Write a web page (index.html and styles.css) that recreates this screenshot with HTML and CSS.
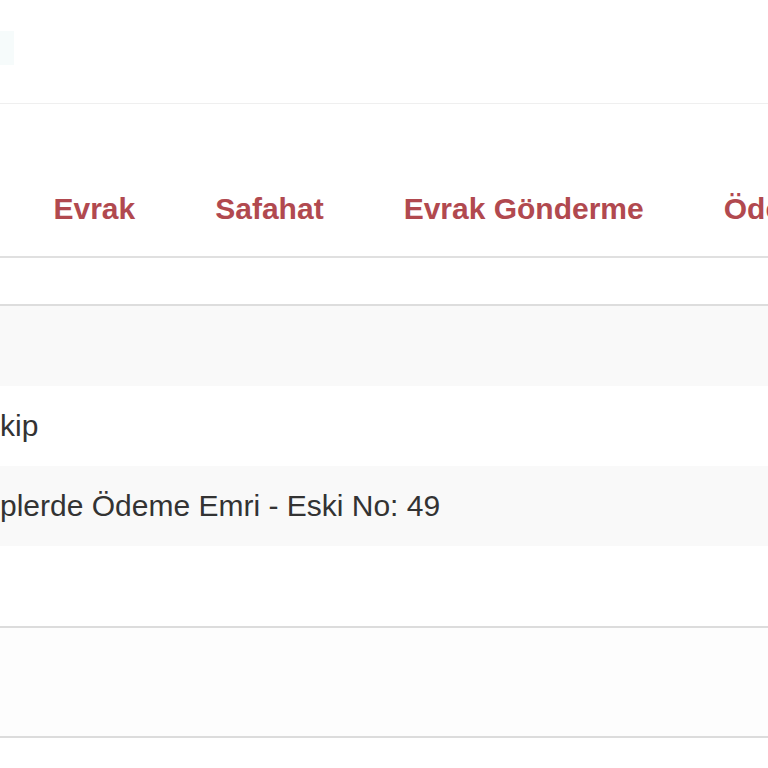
FILE: index.html
```html
<!DOCTYPE html>
<html lang="tr">
<head>
<meta charset="utf-8">
<title>Takip</title>
<link rel="stylesheet" href="styles.css">
</head>
<body>
<div class="page">
  <header class="header">
    <div class="logo-edge"></div>
  </header>
  <nav class="tabs">
    <a class="tab">Evrak</a>
    <a class="tab">Safahat</a>
    <a class="tab">Evrak Gönderme</a>
    <a class="tab">Ödeme</a>
  </nav>
  <div class="spacer"></div>
  <div class="table">
    <div class="row striped"><span class="cell"></span></div>
    <div class="row"><span class="cell">kip</span></div>
    <div class="row striped"><span class="cell">plerde Ödeme Emri - Eski No: 49</span></div>
    <div class="row"><span class="cell"></span></div>
  </div>
  <div class="footer-band"></div>
</div>
</body>
</html>
```
FILE: styles.css
```css
html, body {
  margin: 0;
  padding: 0;
  background: #ffffff;
}
body {
  font-family: "Liberation Sans", Arial, sans-serif;
  color: #333333;
  overflow: hidden;
}
.page {
  width: 768px;
  height: 768px;
  overflow: hidden;
}
.header {
  height: 104px;
  border-bottom: 1px solid #efefef;
  display: flex;
  align-items: flex-start;
  box-sizing: border-box;
  padding-top: 31px;
}
.logo-edge {
  width: 14px;
  height: 34px;
  background: #f6fbfb;
}
.tabs {
  height: 154px;
  box-sizing: border-box;
  padding-top: 88px;
  padding-left: 13.5px;
  display: flex;
  white-space: nowrap;
  border-bottom: 2px solid #e0e0e0;
}
.tab {
  padding: 0 40px;
  font-size: 30px;
  line-height: 34px;
  font-weight: bold;
  color: #b1494f;
  text-decoration: none;
}
.spacer {
  height: 48px;
  box-sizing: border-box;
  border-bottom: 2px solid #dddddd;
}
.table {
  display: flex;
  flex-direction: column;
}
.row {
  height: 80px;
  display: flex;
  align-items: center;
  white-space: nowrap;
}
.row.striped {
  background: #f9f9f9;
}
.cell {
  font-size: 30px;
  line-height: 34px;
  color: #333333;
}
.footer-band {
  height: 112px;
  box-sizing: border-box;
  border-top: 2px solid #dcdcdc;
  border-bottom: 2px solid #dcdcdc;
  background: #fdfdfd;
}
```
